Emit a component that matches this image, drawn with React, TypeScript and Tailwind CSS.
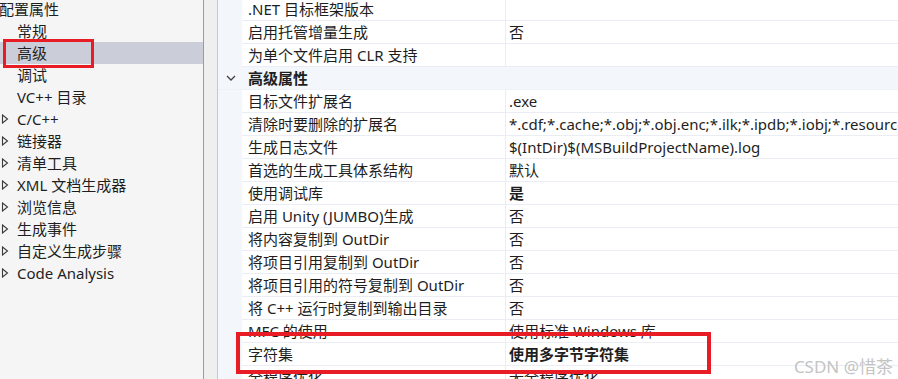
import React from 'react';

interface TreeItem {
  label: string;
  level: 0 | 1;
  expandable?: boolean;
  selected?: boolean;
}

interface PropRow {
  name: string;
  value?: string;
  bold?: boolean;
  header?: boolean;
}

const treeItems: TreeItem[] = [
  { label: '配置属性', level: 0 },
  { label: '常规', level: 1 },
  { label: '高级', level: 1, selected: true },
  { label: '调试', level: 1 },
  { label: 'VC++ 目录', level: 1 },
  { label: 'C/C++', level: 1, expandable: true },
  { label: '链接器', level: 1, expandable: true },
  { label: '清单工具', level: 1, expandable: true },
  { label: 'XML 文档生成器', level: 1, expandable: true },
  { label: '浏览信息', level: 1, expandable: true },
  { label: '生成事件', level: 1, expandable: true },
  { label: '自定义生成步骤', level: 1, expandable: true },
  { label: 'Code Analysis', level: 1, expandable: true },
];

const propRows: PropRow[] = [
  { name: '.NET 目标框架版本' },
  { name: '启用托管增量生成', value: '否' },
  { name: '为单个文件启用 CLR 支持' },
  { name: '高级属性', header: true },
  { name: '目标文件扩展名', value: '.exe' },
  {
    name: '清除时要删除的扩展名',
    value:
      '*.cdf;*.cache;*.obj;*.obj.enc;*.ilk;*.ipdb;*.iobj;*.resources;*.tlb;*.tli;*.tlh;*.tmp;*.rsp;*.pgc;*.pgd;*.meta;*.tlog;*.manifest;*.res;*.pch;*.exp;*.idb',
  },
  { name: '生成日志文件', value: '$(IntDir)$(MSBuildProjectName).log' },
  { name: '首选的生成工具体系结构', value: '默认' },
  { name: '使用调试库', value: '是', bold: true },
  { name: '启用 Unity (JUMBO)生成', value: '否' },
  { name: '将内容复制到 OutDir', value: '否' },
  { name: '将项目引用复制到 OutDir', value: '否' },
  { name: '将项目引用的符号复制到 OutDir', value: '否' },
  { name: '将 C++ 运行时复制到输出目录', value: '否' },
  { name: 'MFC 的使用', value: '使用标准 Windows 库' },
  { name: '字符集', value: '使用多字节字符集', bold: true },
  { name: '全程序优化', value: '无全程序优化' },
];

const Triangle = () => (
  <svg width="8" height="10" viewBox="0 0 8 10" className="shrink-0">
    <polygon points="1.5,1 6.5,5 1.5,9" fill="none" stroke="#3a3a3a" strokeWidth="1.1" />
  </svg>
);

const Chevron = () => (
  <svg width="10" height="6" viewBox="0 0 10 6">
    <polyline points="1,1 5,5 9,1" fill="none" stroke="#404040" strokeWidth="1.3" />
  </svg>
);

const TreePanel = () => (
  <div className="relative w-[204px] shrink-0 h-full bg-[#f5f5f5] border-r border-[#9c9c9c] overflow-hidden">
    <div className="mt-[-2px]">
      {treeItems.map((item) => (
        <div
          key={item.label}
          className={`h-[22px] flex items-center whitespace-nowrap ${item.selected ? 'bg-[#cbcdd9]' : ''}`}
        >
          {item.level === 0 ? (
            <span className="ml-[-1px]">{item.label}</span>
          ) : (
            <>
              <div className="w-[17px] pl-[1px] flex items-center">{item.expandable && <Triangle />}</div>
              <span>{item.label}</span>
            </>
          )}
        </div>
      ))}
    </div>
    {/* highlight box */}
    <div className="absolute left-[3px] top-[39px] w-[91px] h-[29px] border-[3px] border-[#e81c24]" />
  </div>
);

const PropGrid = () => (
  <div className="flex-1 h-full overflow-hidden bg-white border-l border-[#c8c8c8]">
    <div className="mt-[-2px]">
      {propRows.map((row) =>
        row.header ? (
          <div key={row.name} className="h-[23px] flex items-center bg-[#f3f6fb] border-b border-[#eef1f6]">
            <div className="w-[24px] shrink-0 flex items-center justify-end pr-[6px]">
              <Chevron />
            </div>
            <span className="pl-[6px] font-bold">{row.name}</span>
          </div>
        ) : (
          <div key={row.name} className="h-[23px] flex">
            <div className="w-[24px] shrink-0 bg-[#f3f6fb]" />
            <div className="w-[264px] shrink-0 flex items-center pl-[6px] whitespace-nowrap border-b border-r border-[#eaeef4]">
              {row.name}
            </div>
            <div
              className={`flex-1 min-w-0 flex items-center pl-[3px] whitespace-nowrap overflow-hidden border-b border-[#eaeef4] ${row.bold ? 'font-bold' : ''}`}
            >
              {row.value}
            </div>
          </div>
        )
      )}
    </div>
  </div>
);

export default function App() {
  return (
    <div
      className="relative w-[898px] h-[379px] overflow-hidden flex text-[15px] text-[#1e1e1e] leading-none"
      style={{ fontFamily: '"Noto Sans", "Noto Sans CJK SC", sans-serif' }}
    >
      <TreePanel />
      <div className="w-[13px] shrink-0 h-full bg-[#efefef]" />
      <PropGrid />
      {/* highlight box on the character set row */}
      <div className="absolute left-[236px] top-[332px] w-[475px] h-[42px] border-4 border-[#e81c24]" />
      <div className="absolute right-[5px] bottom-[4px] text-[17px] text-[#c4c4c4]">CSDN @惜茶</div>
    </div>
  );
}
